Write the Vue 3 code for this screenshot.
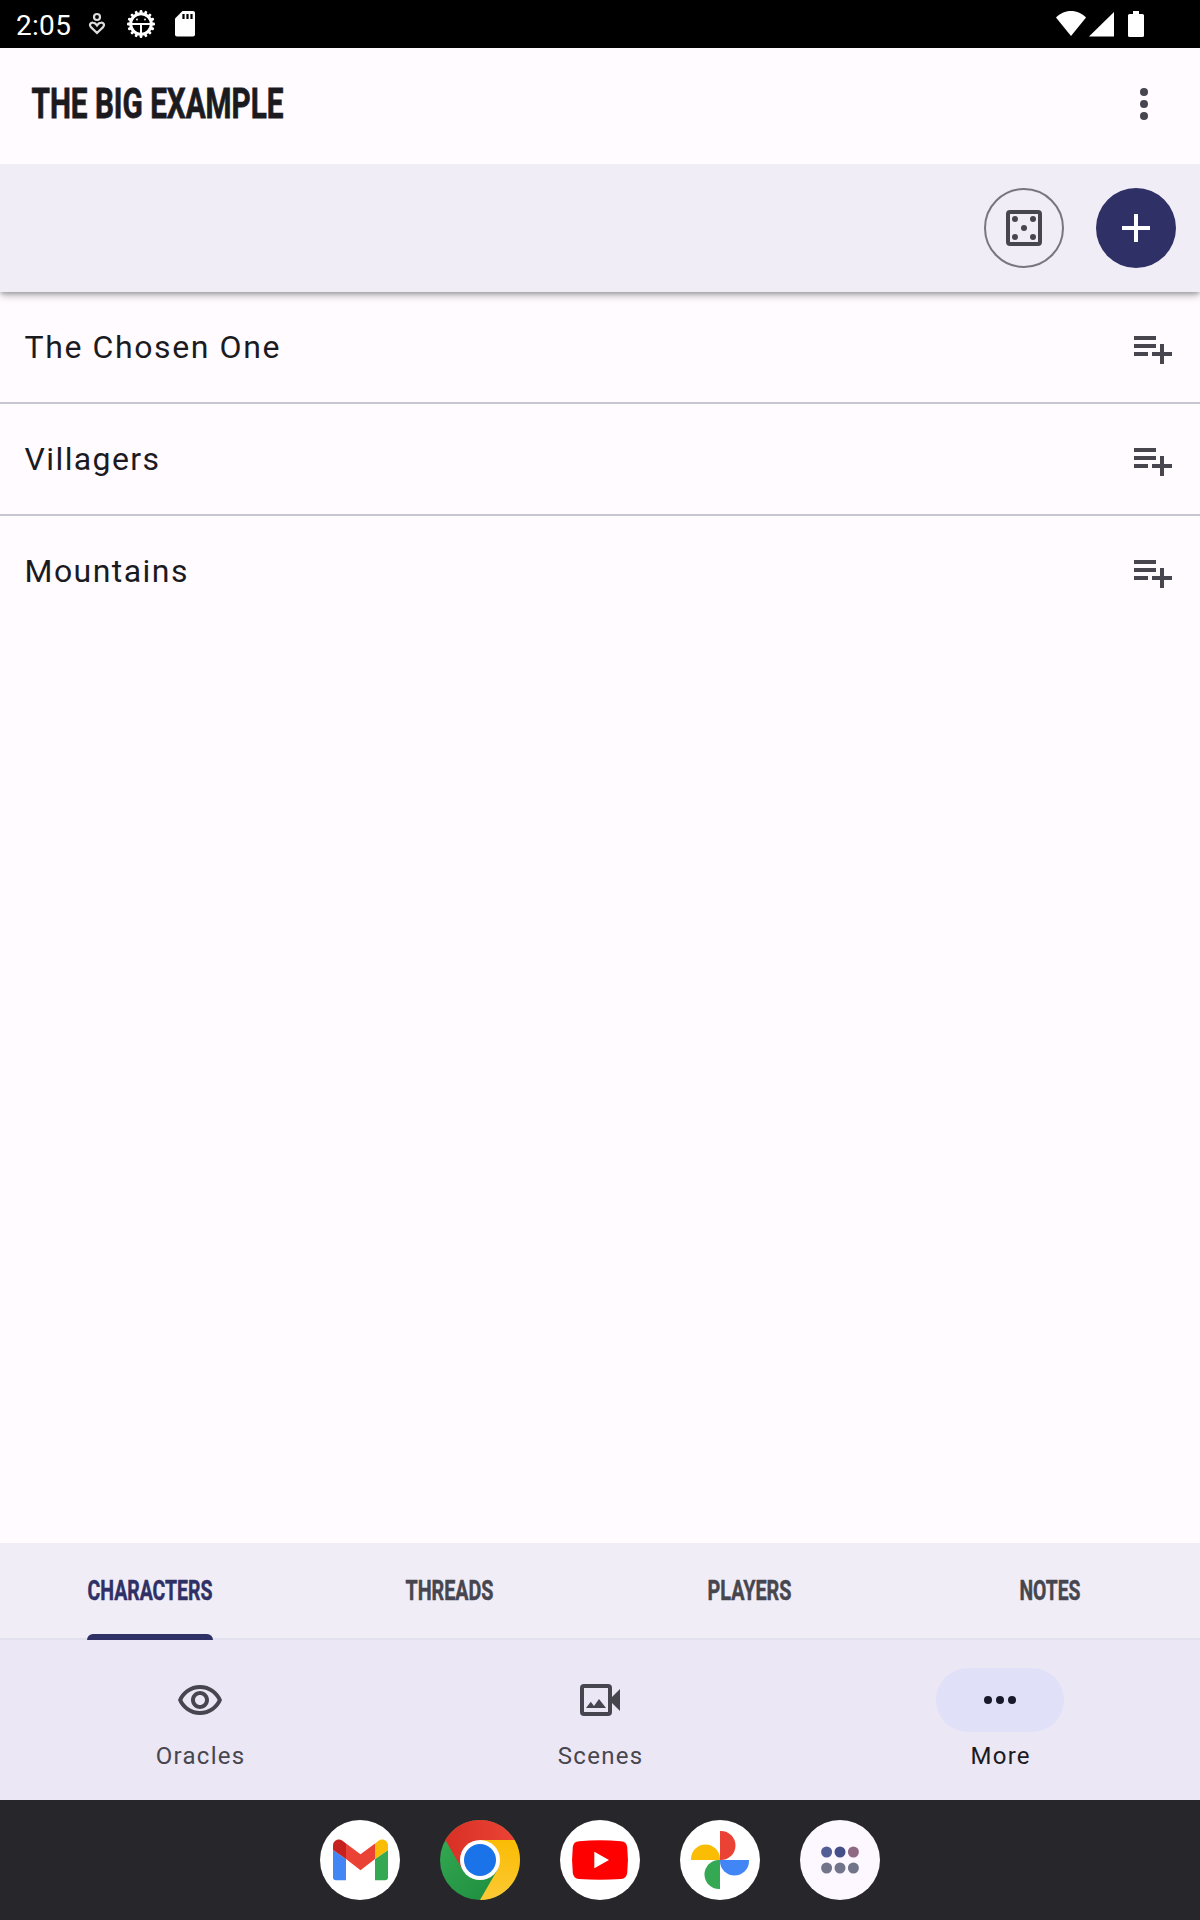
<script setup>
const rows = [
  { name: 'The Chosen One', spacing: '1.6px' },
  { name: 'Villagers', spacing: '1.4px' },
  { name: 'Mountains', spacing: '1.45px' }
]
const tabs = [
  { label: 'CHARACTERS', width: 125, active: true },
  { label: 'THREADS', width: 88 },
  { label: 'PLAYERS', width: 84 },
  { label: 'NOTES', width: 61 }
]
const teeth = Array.from({ length: 16 }, (_, i) => i * 22.5)
</script>

<template>
  <div class="screen">
    <header class="status">
      <span class="clock">2:05</span>
      <svg class="s-heart" width="18" height="24" viewBox="0 0 18 24" fill="none" stroke="#dcdcdc" stroke-width="2.200">
        <circle cx="9" cy="5" r="3" />
        <path d="M9 21L3.200 15.400C.6 12.600 2.800 10.300 5 10.600C7 10.800 8.200 12 9 13.300C9.800 12 11 10.800 13 10.600C15.200 10.300 17.400 12.600 14.800 15.400Z" />
      </svg>
      <svg class="s-gear" width="28" height="28" viewBox="-14 -14 28 28">
        <rect v-for="a in teeth" :key="a" x="-1.400" y="-14" width="2.800" height="5" rx="1.200" fill="#fff" :transform="`rotate(${a})`" />
        <circle r="10.300" fill="none" stroke="#fff" stroke-width="3" />
        <path d="M-9 0H9M0 0V9" stroke="#fff" stroke-width="2" />
        <circle cx="-4" cy="-4.500" r=".9" fill="#fff" />
        <circle cx="4" cy="-4.500" r=".9" fill="#fff" />
      </svg>
      <svg class="s-sd" width="20" height="26" viewBox="0 0 20 26">
        <path d="M7.500 0H18a2 2 0 0 1 2 2V23.500a2 2 0 0 1-2 2H2a2 2 0 0 1-2-2V7.500Z" fill="#fff" />
        <path d="M8.500 3v5M12.500 3v5M16.500 3v5" stroke="#000" stroke-width="2.200" />
      </svg>
      <svg class="s-right" width="90" height="28" viewBox="0 0 90 28" fill="#fff">
        <path d="M0 7.500C4 3.500 9 1 15 1s11 2.500 15 6.500L15 26Z" />
        <path d="M33 26.500L58 2V26.500Z" />
        <path d="M77 1h6v3h3.500A1.500 1.500 0 0 1 88 5.500v20a1.500 1.500 0 0 1-1.500 1.500h-13a1.500 1.500 0 0 1-1.500-1.500v-20A1.500 1.500 0 0 1 73.500 4H77Z" />
      </svg>
    </header>

    <div class="appbar">
      <svg class="title" width="256" height="44" viewBox="0 0 256 44">
        <text x="-.5" y="35.500" textLength="252" lengthAdjust="spacingAndGlyphs">THE BIG EXAMPLE</text>
      </svg>
      <svg width="48" height="48" viewBox="0 0 24 24" fill="#47464f">
        <circle cx="12" cy="6" r="2" /><circle cx="12" cy="12" r="2" /><circle cx="12" cy="18" r="2" />
      </svg>
    </div>

    <div class="tools">
      <button class="round outline">
        <svg width="48" height="48" viewBox="0 0 24 24" fill="#47464f">
          <rect x="4" y="4" width="16" height="16" rx="1" fill="none" stroke="#47464f" stroke-width="2" />
          <circle cx="7.500" cy="7.500" r="1.500" /><circle cx="16.500" cy="7.500" r="1.500" />
          <circle cx="12" cy="12" r="1.500" />
          <circle cx="7.500" cy="16.500" r="1.500" /><circle cx="16.500" cy="16.500" r="1.500" />
        </svg>
      </button>
      <button class="round filled">
        <svg width="48" height="48" viewBox="0 0 24 24"><path d="M5 12H19M12 5V19" stroke="#fff" stroke-width="2" /></svg>
      </button>
    </div>

    <main class="list">
      <div v-for="r in rows" :key="r.name" class="row">
        <span :style="{ letterSpacing: r.spacing }">{{ r.name }}</span>
        <svg width="38" height="28" viewBox="0 0 38 28" fill="#47464f">
          <path d="M0 0H22V4H0ZM0 8H22V12H0ZM0 16H14V20H0ZM18 16H26V8H30V16H38V20H30V28H26V20H18Z" />
        </svg>
      </div>
    </main>

    <nav class="tabs">
      <div v-for="t in tabs" :key="t.label" class="tab" :class="{ active: t.active }">
        <svg :width="t.width" height="30" :viewBox="`0 0 ${t.width} 30`">
          <text x="-.5" y="25" :textLength="t.width" lengthAdjust="spacingAndGlyphs">{{ t.label }}</text>
        </svg>
        <i v-if="t.active" class="indicator"></i>
      </div>
    </nav>

    <nav class="bottom">
      <div class="dest">
        <div class="pill">
          <svg width="48" height="48" viewBox="0 -.5 24 24" fill="#47464f">
            <path d="M12 6c3.790 0 7.170 2.130 8.820 5.500C19.170 14.870 15.790 17 12 17s-7.170-2.130-8.820-5.500C4.830 8.130 8.210 6 12 6m0-2C7 4 2.730 7.110 1 11.500 2.730 15.890 7 19 12 19s9.270-3.110 11-7.500C21.270 7.110 17 4 12 4zm0 5c1.380 0 2.500 1.120 2.500 2.500S13.380 14 12 14s-2.500-1.120-2.500-2.500S10.620 9 12 9m0-2c-2.480 0-4.500 2.020-4.500 4.500S9.520 16 12 16s4.500-2.020 4.500-4.500S14.480 7 12 7z" />
          </svg>
        </div>
        <span>Oracles</span>
      </div>
      <div class="dest">
        <div class="pill">
          <svg width="48" height="48" viewBox="0 0 24 24" fill="#47464f">
            <rect x="3" y="5" width="14" height="14" rx="1" fill="none" stroke="#47464f" stroke-width="2" />
            <path d="M18 10.480L22 6.500V17.500L18 13.520Z" />
            <path d="M5 16L7.400 12.900L9 15L11.500 11.500L15 16Z" />
          </svg>
        </div>
        <span>Scenes</span>
      </div>
      <div class="dest current">
        <div class="pill">
          <svg width="48" height="48" viewBox="0 0 24 24" fill="#19192c">
            <circle cx="6" cy="12" r="2" /><circle cx="12" cy="12" r="2" /><circle cx="18" cy="12" r="2" />
          </svg>
        </div>
        <span>More</span>
      </div>
    </nav>

    <footer class="dock">
      <svg width="80" height="80" viewBox="0 0 80 80">
        <circle cx="40" cy="40" r="40" fill="#fff" />
        <path d="M13 30L26 39V60.300H16a3 3 0 0 1-3-3Z" fill="#4285f4" />
        <path d="M68 30L55 39V60.300H65a3 3 0 0 0 3-3Z" fill="#34a853" />
        <path d="M26 39V23.500L22.500 20.800C18.500 17.800 13 20.500 13 25.500V30Z" fill="#c5221f" />
        <path d="M55 39V23.500L58.500 20.800C62.500 17.800 68 20.500 68 25.500V30Z" fill="#fbbc04" />
        <path d="M26 23.500L40.500 34.300L55 23.500V39L40.500 50.300L26 39Z" fill="#ea4335" />
      </svg>
      <svg width="80" height="80" viewBox="0 0 80 80">
        <defs>
          <linearGradient id="cg" x1="0" y1=".2" x2=".7" y2="1"><stop stop-color="#34a853" /><stop offset="1" stop-color="#1e8e3e" /></linearGradient>
          <linearGradient id="cr" x1="0" y1="0" x2="1" y2="0"><stop stop-color="#d93025" /><stop offset="1" stop-color="#ea4335" /></linearGradient>
          <linearGradient id="cy" x1=".5" y1="1" x2=".6" y2="0"><stop stop-color="#fcc934" /><stop offset="1" stop-color="#fbbc04" /></linearGradient>
        </defs>
        <circle cx="40" cy="40" r="40" fill="url(#cg)" />
        <path d="M40 20H74.640A40 40 0 0 1 40 80L57.320 50Z" fill="url(#cy)" />
        <path d="M5.360 20A40 40 0 0 1 74.640 20H40L22.680 50Z" fill="url(#cr)" />
        <circle cx="40" cy="40" r="20" fill="#fff" />
        <circle cx="40" cy="40" r="16" fill="#1a73e8" />
      </svg>
      <svg width="80" height="80" viewBox="0 0 80 80">
        <circle cx="40" cy="40" r="40" fill="#fff" />
        <path d="M19 21.200Q40 19.500 61 21.200Q66.500 21.500 67.200 27Q68.700 40 67.200 53Q66.500 58.500 61 58.900Q40 60.500 19 58.900Q13.500 58.500 12.800 53Q11.300 40 12.800 27Q13.500 21.500 19 21.200Z" fill="#f00" />
        <path d="M34.300 31.700V48.300L49 40Z" fill="#fff" />
      </svg>
      <svg width="80" height="80" viewBox="0 0 80 80">
        <circle cx="40" cy="40" r="40" fill="#fff" />
        <path d="M40 11h1A14.500 14.500 0 0 1 41 40H40z" fill="#ea4335" />
        <path d="M40 11h1A14.500 14.500 0 0 1 41 40H40z" fill="#4285f4" transform="rotate(90 40 40)" />
        <path d="M40 11h1A14.500 14.500 0 0 1 41 40H40z" fill="#34a853" transform="rotate(180 40 40)" />
        <path d="M40 11h1A14.500 14.500 0 0 1 41 40H40z" fill="#fbbc04" transform="rotate(270 40 40)" />
      </svg>
      <svg width="80" height="80" viewBox="0 0 80 80" fill="#72758a">
        <circle cx="40" cy="40" r="40" fill="#fdf8ff" />
        <circle cx="26.600" cy="32" r="5.500" fill="#535e97" />
        <circle cx="40" cy="32" r="5.500" fill="#444f89" />
        <circle cx="53.400" cy="32" r="5.500" fill="#8f6984" />
        <circle cx="26.600" cy="48" r="5.500" /><circle cx="40" cy="48" r="5.500" /><circle cx="53.400" cy="48" r="5.500" />
      </svg>
    </footer>
  </div>
</template>

<style>
body { margin: 0; background: #fffbff; }
</style>

<style scoped>
.screen {
  width: 1200px;
  height: 1920px;
  display: flex;
  flex-direction: column;
  overflow: hidden;
  background: #fffbff;
  color: #1b1b1f;
  font-family: Roboto, "Liberation Sans", sans-serif;
}
svg { display: block; flex: none; overflow: visible; }
.status {
  height: 48px;
  flex: none;
  box-sizing: border-box;
  padding: 0 54px 0 16px;
  display: flex;
  align-items: flex-start;
  background: #000;
  color: #fff;
}
.clock { width: 72px; font-size: 28px; line-height: 32px; margin-top: 10px; letter-spacing: .3px; }
.s-heart { margin-top: 12px; }
.s-gear { margin: 10px 0 0 21px; }
.s-sd { margin: 11px 0 0 20px; }
.s-right { margin: 10px 0 0 auto; }
.appbar {
  height: 116px;
  flex: none;
  box-sizing: border-box;
  padding: 0 32px 4px;
  display: flex;
  align-items: center;
  justify-content: space-between;
}
.title text { font-size: 43.200px; font-weight: 700; fill: #1b1b1f; stroke: #1b1b1f; stroke-width: .8px; }
.tools {
  height: 128px;
  flex: none;
  box-sizing: border-box;
  padding-right: 24px;
  display: flex;
  align-items: center;
  justify-content: flex-end;
  gap: 32px;
  background: #f0edf7;
  box-shadow: 0 5px 7px -1px rgba(0, 0, 0, .26), 0 2px 3px rgba(0, 0, 0, .14);
  clip-path: inset(0 0 -20px 0);
}
.round {
  width: 80px;
  height: 80px;
  padding: 0;
  border: 0;
  border-radius: 50%;
  display: flex;
  align-items: center;
  justify-content: center;
  background: none;
}
.outline { border: 2px solid #777680; box-sizing: border-box; }
.filled { background: #2f3066; }
.list { flex: 1; }
.row {
  height: 112px;
  box-sizing: border-box;
  padding: 0 28px 0 24.500px;
  display: flex;
  align-items: center;
  justify-content: space-between;
  border-bottom: 2px solid #c7c5d0;
}
.row:last-child { border-color: transparent; }
.row span { font-size: 32px; line-height: 40px; margin-bottom: 1px; }
.row svg { margin-top: 6px; }
.tabs {
  height: 97px;
  flex: none;
  box-sizing: border-box;
  display: flex;
  border-bottom: 2px solid #e4e1ee;
  background: #f0edf7;
}
.tab { flex: 1; position: relative; display: flex; justify-content: center; padding-top: 32px; }
.tab text { font-size: 28px; font-weight: 700; fill: #47464f; stroke: #47464f; stroke-width: .5px; }
.tab.active text { fill: #2f3066; stroke: #2f3066; }
.indicator {
  position: absolute;
  left: 87px;
  bottom: -2px;
  width: 126px;
  height: 6px;
  border-radius: 6px 6px 0 0;
  background: #2f3066;
}
.bottom {
  height: 160px;
  flex: none;
  box-sizing: border-box;
  padding: 28px 0 0;
  display: flex;
  background: #ebe7f5;
}
.dest {
  flex: 1;
  max-width: 400px;
  display: flex;
  flex-direction: column;
  align-items: center;
  gap: 8px;
  color: #47464f;
  font-size: 24px;
  line-height: 32px;
  letter-spacing: 1.300px;
}
.dest span { padding-left: 1.300px; }
.current { color: #1b1b1f; }
.pill {
  width: 128px;
  height: 64px;
  border-radius: 32px;
  display: flex;
  align-items: center;
  justify-content: center;
}
.current .pill { background: #e1e0f9; }
.dock {
  height: 120px;
  flex: none;
  display: flex;
  align-items: center;
  justify-content: center;
  gap: 40px;
  background: #27262b;
}
</style>
